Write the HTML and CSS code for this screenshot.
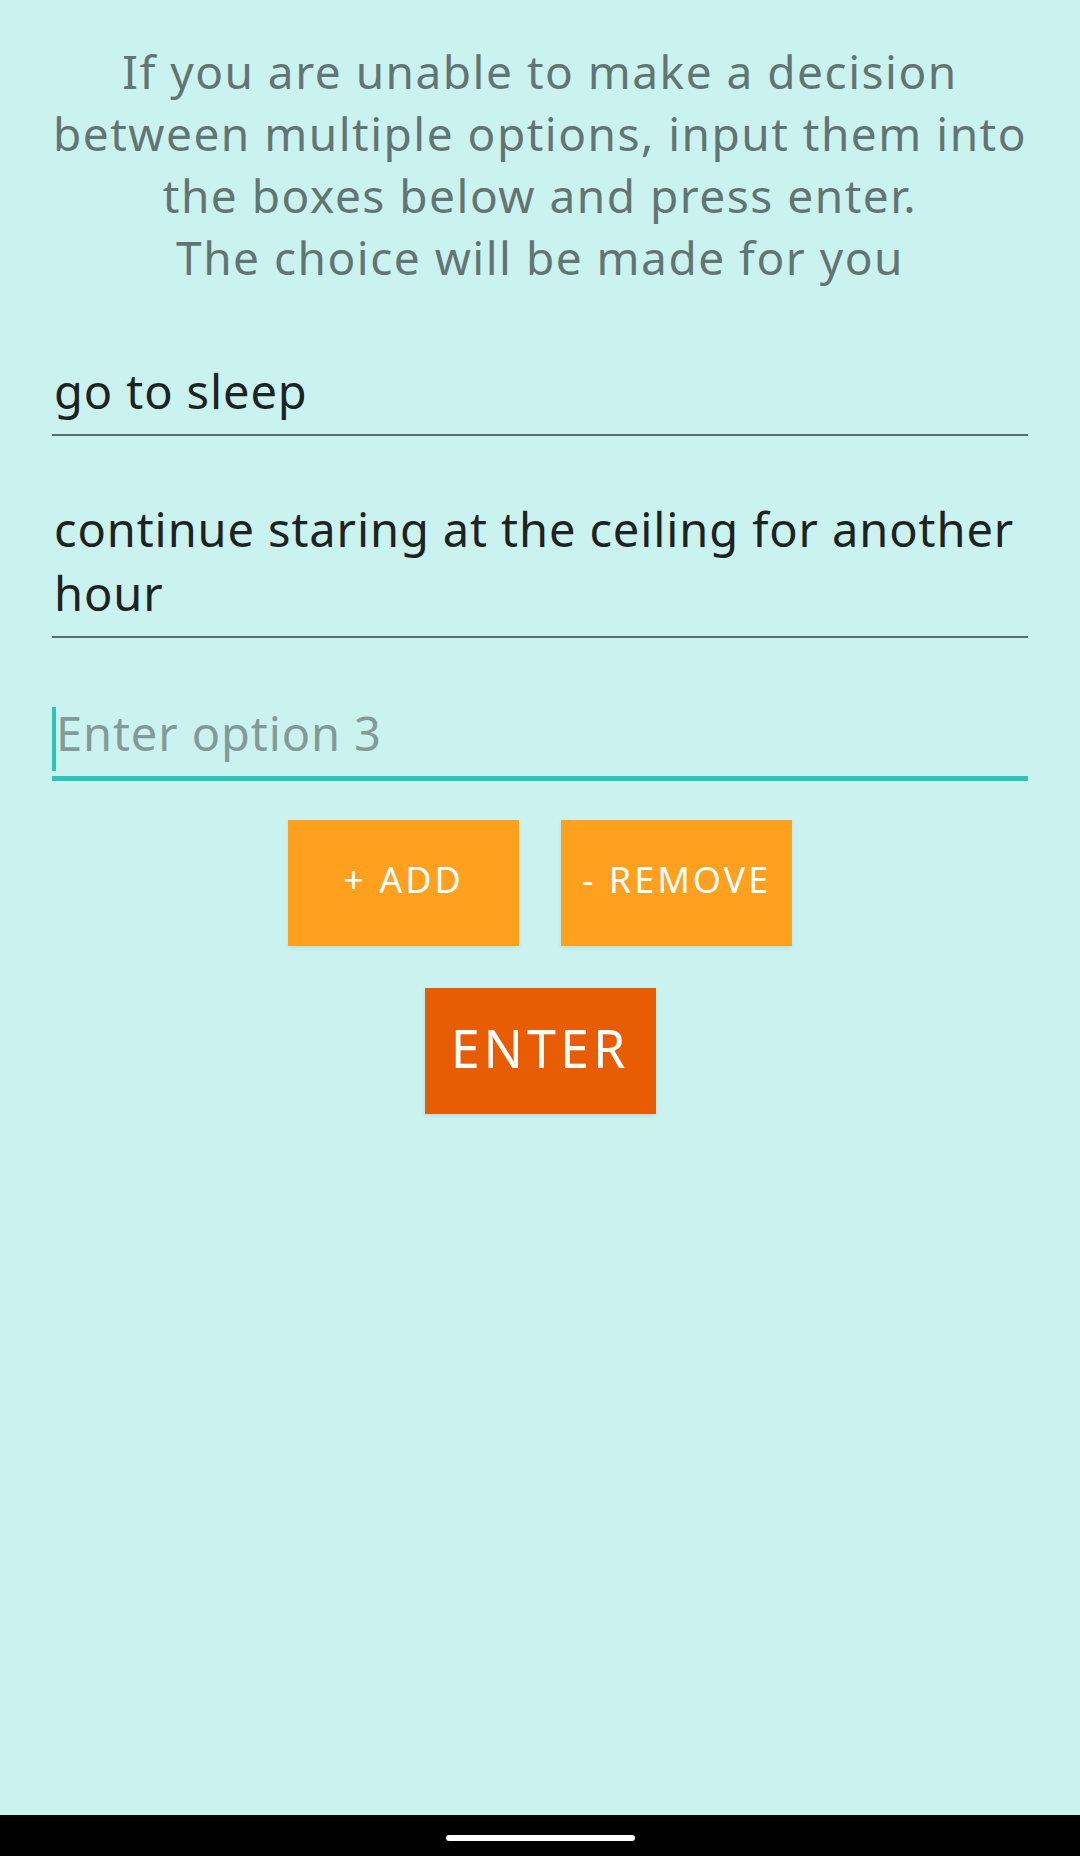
FILE: index.html
```html
<!DOCTYPE html>
<html lang="en">
<head>
<meta charset="utf-8">
<title>Decision maker</title>
<link rel="stylesheet" href="styles.css">
</head>
<body>
<div class="screen">
  <main class="content">
    <p class="intro">If you are unable to make a decision<br>between multiple options, input them into<br>the boxes below and press enter.<br>The choice will be made for you</p>

    <div class="field">
      <div class="field-text">go to sleep</div>
    </div>

    <div class="field">
      <div class="field-text">continue staring at the ceiling for another hour</div>
    </div>

    <div class="field field-focused">
      <span class="caret"></span>
      <div class="field-text placeholder">Enter option 3</div>
    </div>

    <div class="btn-row">
      <button class="btn btn-small">+ ADD</button>
      <button class="btn btn-small">- REMOVE</button>
    </div>
    <div class="btn-row btn-row-enter">
      <button class="btn btn-enter">ENTER</button>
    </div>
  </main>
  <div class="navbar"><span class="nav-pill"></span></div>
</div>
</body>
</html>
```

FILE: styles.css
```css
html, body {
  margin: 0;
  padding: 0;
  background: #caf3ef;
}

.screen {
  width: 1080px;
  height: 1856px;
  display: flex;
  flex-direction: column;
  background: #caf3ef;
  font-family: "Noto Sans", "Open Sans", sans-serif;
}

.content {
  flex: 1;
  padding: 0 52px;
  display: flex;
  flex-direction: column;
}

.intro {
  margin: 40px 0 0 0;
  text-align: center;
  font-size: 46px;
  line-height: 62px;
  letter-spacing: 1.5px;
  color: #627573;
}

.field {
  position: relative;
  margin-top: 59px;
  padding: 2px 0 11px 2px;
  border-bottom: 2px solid #5b6d6b;
}

.intro + .field {
  margin-top: 69px;
}

.field-text {
  font-size: 47px;
  line-height: 64px;
  letter-spacing: 0.9px;
  color: #1d2222;
}

.field-focused {
  margin-top: 61px;
  border-bottom: 5px solid #2ec4b6;
  padding-left: 4px;
}

.placeholder {
  color: #839b98;
}

.caret {
  position: absolute;
  left: 0;
  top: 8px;
  width: 4px;
  height: 64px;
  background: #2ec4b6;
}

.btn-row {
  display: flex;
  justify-content: center;
  gap: 42px;
  margin-top: 39px;
}

.btn-row-enter {
  margin-top: 42px;
}

.btn {
  width: 231px;
  height: 126px;
  border: none;
  border-radius: 0;
  padding: 0 0 8px 0;
  color: #ffffff;
  font-family: "Noto Sans", "Open Sans", sans-serif;
  box-shadow: 0 2px 4px rgba(0, 0, 0, 0.08);
}

.btn-small {
  background: #ffa01f;
  font-size: 36px;
  letter-spacing: 3px;
}

.btn-enter {
  background: #e85d04;
  font-size: 52px;
  letter-spacing: 4px;
}

.navbar {
  height: 41px;
  background: #000000;
  display: flex;
  justify-content: center;
  align-items: flex-start;
}

.nav-pill {
  margin-top: 20px;
  width: 189px;
  height: 6px;
  border-radius: 3px;
  background: #ffffff;
}
```
